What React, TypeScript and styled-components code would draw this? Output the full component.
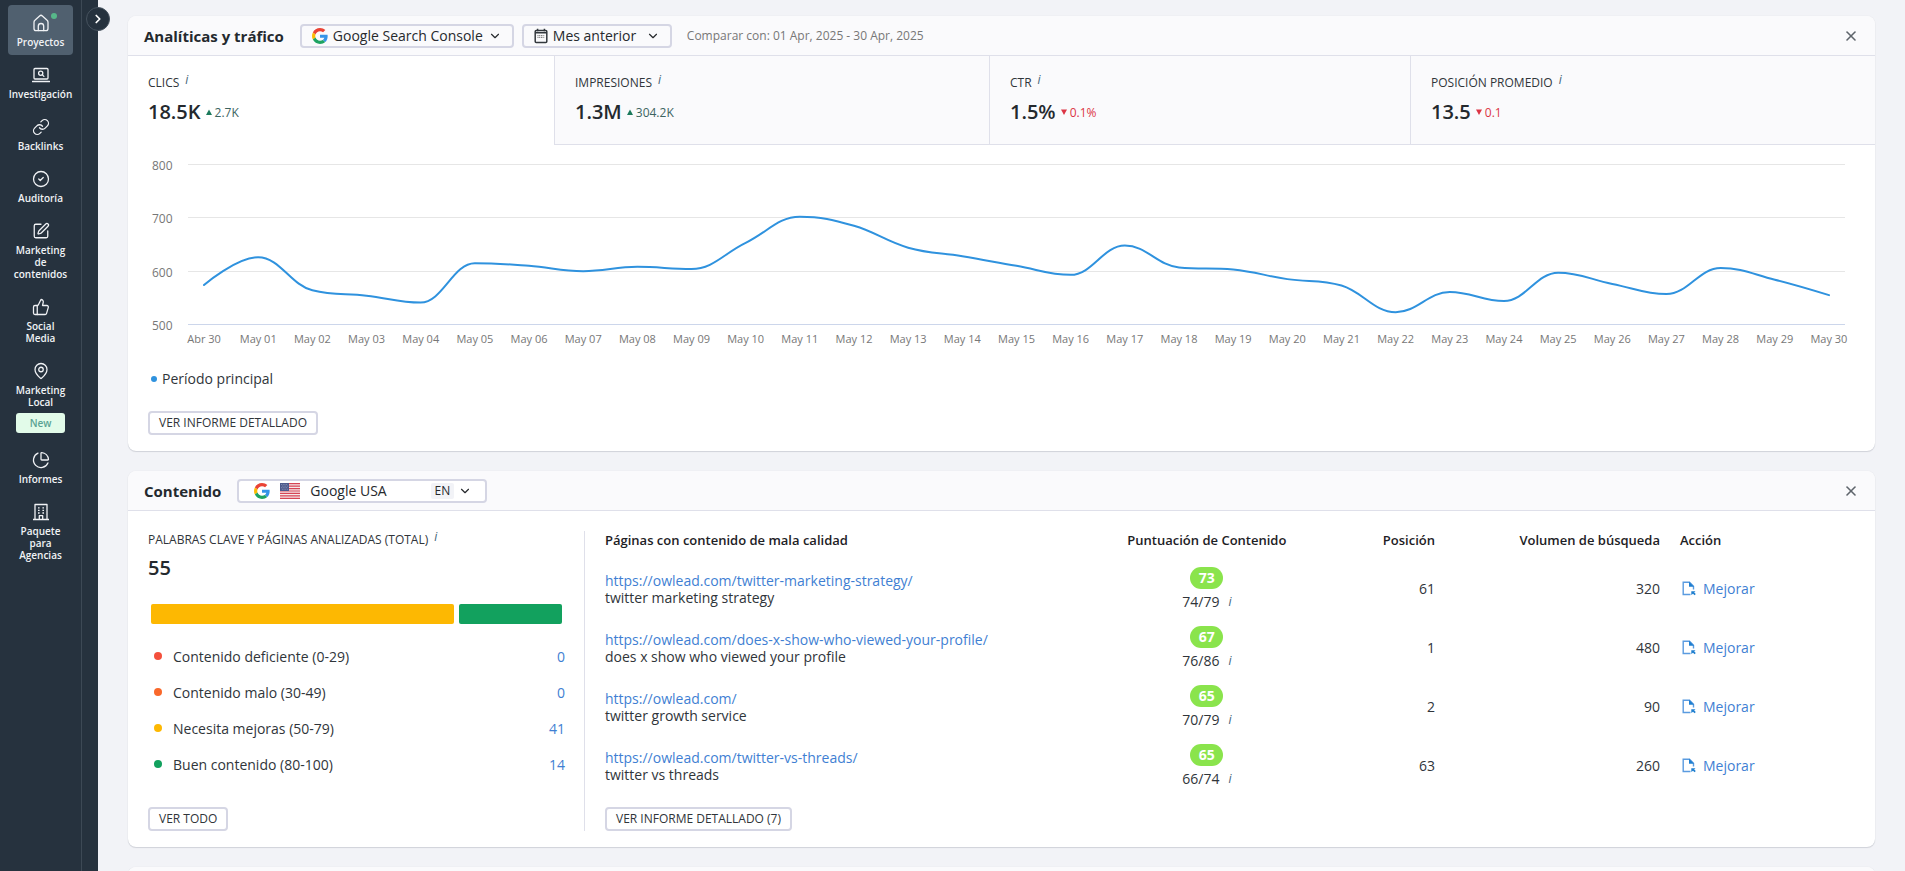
import React from "react";
import styled, { createGlobalStyle } from "styled-components";
import {
  Link,
  CircleCheck,
  SquarePen,
  ThumbsUp,
  MapPin,
  ChartPie,
  ChevronDown,
  ChevronRight,
  X,
} from "lucide-react";

const color = {
  page: "#f2f3f7",
  nav: "#26323e",
  navLine: "#3d4955",
  head: "#fafafc",
  line: "#dfe0ea",
  control: "#d5d6e4",
  text: "#30353a",
  strong: "#24292e",
  muted: "#777777",
  link: "#3f7fd3",
  chart: "#2f92de",
  up: "#1c7a5c",
  down: "#dc3545",
};

const GlobalStyle = createGlobalStyle`
  *, *::before, *::after { box-sizing: border-box; }
  body {
    margin: 0;
    background: ${color.page};
    color: ${color.text};
    font-family: "Open Sans", "Noto Sans", sans-serif;
    font-size: 13px;
    line-height: 17px;
  }
  button, select { font: inherit; color: inherit; }
  button { cursor: pointer; }
  a { color: ${color.link}; text-decoration: none; }
`;

/* ---------- shell ---------- */

const Shell = styled.div`
  display: flex;
  height: 100vh;
`;

const Sidebar = styled.nav`
  position: relative;
  display: flex;
  flex: none;
  width: 98px;
  background: ${color.nav};
`;

const NavList = styled.ul`
  display: flex;
  flex-direction: column;
  gap: 2px;
  width: 82px;
  margin: 0;
  padding: 5px 8px;
  border-right: 1px solid ${color.navLine};
  list-style: none;
`;

const NavItem = styled.a<{ $active?: boolean }>`
  position: relative;
  display: flex;
  flex-direction: column;
  align-items: center;
  gap: 4px;
  padding: 9px 0 7px;
  border-radius: 4px;
  background: ${(p) => (p.$active ? "#50606f" : "transparent")};
  color: #f0f2f5;
  font-size: 10px;
  font-weight: 600;
  line-height: 12px;
  text-align: center;

  svg { display: block; }
`;

const NavLabel = styled.span`
  white-space: pre-line;
`;

const NavDot = styled.span`
  position: absolute;
  top: 8px;
  right: 16px;
  width: 6px;
  height: 6px;
  border-radius: 50%;
  background: #57b88a;
`;

const NewBadge = styled.span`
  width: 49px;
  margin-top: 1px;
  border-radius: 3px;
  background: #e2fbe9;
  color: #5aa393;
  line-height: 20px;
`;

const Toggle = styled.button`
  position: absolute;
  top: 7px;
  right: -12px;
  display: grid;
  place-items: center;
  width: 24px;
  height: 24px;
  padding: 0;
  border: 1px solid #46525e;
  border-radius: 50%;
  background: ${color.nav};
  color: #fff;
`;

const Main = styled.main`
  display: flex;
  flex: 1;
  flex-direction: column;
  gap: 20px;
  min-width: 0;
  padding: 16px 30px;
  overflow-y: auto;
  scrollbar-width: none;
`;

/* ---------- card ---------- */

const Card = styled.section`
  flex: none;
  border-radius: 8px;
  background: #fff;
  box-shadow: 0 0 1px rgba(30, 35, 60, 0.15), 0 1px 1px rgba(30, 35, 60, 0.14);
  overflow: hidden;
`;

const CardHead = styled.header`
  display: flex;
  align-items: center;
  height: 40px;
  padding: 0 16px;
  border-bottom: 1px solid ${color.line};
  background: ${color.head};
`;

const CardTitle = styled.h2`
  margin: 0 16px 0 0;
  color: ${color.strong};
  font-size: 15px;
  font-weight: 700;
  line-height: 20px;
`;

const CloseButton = styled.button`
  display: grid;
  place-items: center;
  width: 16px;
  height: 16px;
  margin-left: auto;
  padding: 0;
  border: 0;
  background: none;
  color: #5e646b;
`;

const Picker = styled.label<{ $width: number }>`
  display: flex;
  align-items: center;
  gap: 5px;
  width: ${(p) => p.$width}px;
  height: 24px;
  margin-right: 8px;
  padding: 0 10px;
  border: 2px solid ${color.control};
  border-radius: 4px;
  background: ${color.head};
  color: #26292d;

  svg { flex: none; }
`;

const WidePicker = styled(Picker)`
  gap: 10px;
  padding: 0 13px 0 15px;
  background: #fff;
`;

const Select = styled.select`
  flex: 1;
  min-width: 0;
  padding: 0;
  border: 0;
  background: transparent;
  font-size: 14px;
  line-height: 18px;
  appearance: none;
`;

const Language = styled.span`
  display: flex;
  align-items: center;
  gap: 4px;
`;

const Chip = styled.span`
  padding: 0 4px;
  border-radius: 2px;
  background: ${color.page};
  font-size: 12px;
  line-height: 16px;
`;

const Compare = styled.span`
  margin-left: 7px;
  color: ${color.muted};
  font-size: 12px;
`;

const OutlineButton = styled.button`
  align-self: flex-start;
  height: 24px;
  padding: 0 9px;
  border: 2px solid ${color.control};
  border-radius: 4px;
  background: #fff;
  font-size: 12px;
  line-height: 20px;
  white-space: nowrap;
`;

const InfoMark = styled.i`
  color: #3f6376;
  font-size: 12px;
  line-height: 12px;
`;

/* ---------- analytics ---------- */

const Tabs = styled.div`
  display: grid;
  grid-template-columns: 426fr 435fr 421fr 465fr;
`;

const Tab = styled.button<{ $active?: boolean }>`
  display: flex;
  flex-direction: column;
  gap: 8px;
  height: 89px;
  padding: 18px 20px 0;
  border: 0;
  border-bottom: 1px solid ${(p) => (p.$active ? "#fff" : color.line)};
  background: ${(p) => (p.$active ? "#fff" : color.head)};
  text-align: left;

  & + & { border-left: 1px solid ${color.line}; }
`;

const Caption = styled.span`
  display: flex;
  gap: 6px;
  font-size: 12px;
  line-height: 18px;
`;

const Figures = styled.span`
  display: flex;
  align-items: center;
  gap: 5px;
`;

const Value = styled.strong`
  color: ${color.strong};
  font-size: 20px;
  font-weight: 600;
  line-height: 24px;
`;

const Delta = styled.span<{ $down?: boolean }>`
  display: flex;
  align-items: center;
  gap: 3px;
  color: ${(p) => (p.$down ? color.down : "#3c6460")};
  font-size: 12px;
`;

const Chart = styled.div`
  display: flex;
  padding: 19px 19px 0 20px;
`;

const YAxis = styled.div`
  display: flex;
  flex-direction: column;
  justify-content: space-between;
  width: 29px;
  height: 176px;
  margin-top: -6px;
  padding-left: 4px;
  color: ${color.muted};
  font-size: 12px;
  line-height: 16px;
`;

const Plot = styled.div`
  flex: 1;
  min-width: 0;
`;

const PlotArea = styled.div`
  display: grid;
  height: 161px;
  padding: 0 11px;

  > * { grid-area: 1 / 1; }
`;

const GridLines = styled.div`
  display: flex;
  flex-direction: column;
  justify-content: space-between;
`;

const GridLine = styled.hr<{ $base?: boolean }>`
  width: 100%;
  margin: 0;
  border: 0;
  border-top: 1px solid ${(p) => (p.$base ? "#ccd6eb" : "#e6e6e6")};
`;

const LineBox = styled.div`
  padding: 1px 16px 0;

  svg { display: block; width: 100%; height: 160px; overflow: visible; }
`;

const XAxis = styled.div`
  display: grid;
  grid-template-columns: repeat(31, 1fr);
  margin-top: 6px;
  color: ${color.muted};
  font-size: 11px;
  line-height: 16px;
  text-align: center;
  white-space: nowrap;
`;

const XTick = styled.span`
  display: flex;
  justify-content: center;
`;

const CardFoot = styled.div`
  display: flex;
  flex-direction: column;
  gap: 23px;
  padding: 23px 20px 16px;
`;

const Legend = styled.div`
  display: flex;
  align-items: center;
  gap: 5px;
  padding-left: 3px;
  font-size: 14px;
  line-height: 18px;
`;

const Dot = styled.span<{ $color: string; $size: number }>`
  flex: none;
  width: ${(p) => p.$size}px;
  height: ${(p) => p.$size}px;
  border-radius: 50%;
  background: ${(p) => p.$color};
`;

/* ---------- content ---------- */

const ContentBody = styled.div`
  display: flex;
  align-items: stretch;
  padding: 20px 20px 16px;
`;

const Summary = styled.div`
  display: flex;
  flex: none;
  flex-direction: column;
  width: 25.6%;
  height: 300px;
  padding-right: 19px;
  border-right: 1px solid ${color.line};
`;

const Total = styled(Value)`
  margin: 7px 0 24px;
`;

const Bars = styled.div`
  display: flex;
  gap: 5px;
  height: 20px;
  margin: 0 3px 24px;
`;

const Bar = styled.span<{ $weight: number; $color: string }>`
  flex: ${(p) => p.$weight} 1 0;
  border-radius: 2px;
  background: ${(p) => p.$color};
`;

const Groups = styled.ul`
  flex: 1;
  margin: 0;
  padding: 0 0 0 6px;
  list-style: none;
`;

const Group = styled.li`
  display: flex;
  align-items: center;
  gap: 11px;
  height: 16px;
  margin-bottom: 20px;
  font-size: 14px;

  a { margin-left: auto; }
`;

const Pages = styled.div`
  display: flex;
  flex: 1;
  flex-direction: column;
  justify-content: space-between;
  min-width: 0;
  padding-left: 20px;
`;

const PageTable = styled.table`
  width: 100%;
  margin-top: -10px;
  border-collapse: collapse;
  table-layout: fixed;

  th { height: 38px; color: #1d2125; font-size: 13px; font-weight: 600; white-space: nowrap; }
  td { height: 59px; font-size: 14px; line-height: 17px; }
`;

type Align = "left" | "center" | "right";

const HeadCell = styled.th<{ $width: string; $align: Align; $inset?: number }>`
  width: ${(p) => p.$width};
  padding: 0 0 0 ${(p) => p.$inset ?? 0}px;
  text-align: ${(p) => p.$align};
`;

const Cell = styled.td<{ $align: Align; $inset?: number }>`
  padding: 0 0 0 ${(p) => p.$inset ?? 0}px;
  text-align: ${(p) => p.$align};
`;

const PageLink = styled.a`
  display: block;
`;

const Score = styled.span`
  display: block;
  width: 33px;
  margin: 0 auto 4px;
  border-radius: 11px;
  background: #8ae44c;
  color: #fff;
  font-weight: 700;
  line-height: 22px;
`;

const ScoreRange = styled.span`
  display: flex;
  align-items: center;
  justify-content: center;
  gap: 9px;
`;

const Improve = styled.a`
  display: flex;
  align-items: center;
  gap: 7px;
`;

/* ---------- drawings ---------- */

const stroke = {
  width: 18,
  height: 18,
  viewBox: "0 0 18 18",
  fill: "none",
  stroke: "currentColor",
  strokeWidth: 1.3,
  strokeLinecap: "round" as const,
  strokeLinejoin: "round" as const,
};

const HomeIcon = () => (
  <svg {...stroke}>
    <path d="M2 8.200c0-.8.3-1.500.9-2L7.600 1.900a2.100 2.100 0 0 1 2.800 0l4.700 4.300c.6.5.9 1.200.9 2v6.200a2.200 2.200 0 0 1-2.200 2.200H4.200A2.200 2.200 0 0 1 2 14.400z" />
    <path d="M6.300 16.500v-4.300a2.700 2.700 0 0 1 5.400 0v4.300" />
  </svg>
);

const ResearchIcon = () => (
  <svg {...stroke}>
    <rect x="2" y="2.500" width="14" height="10.500" rx="1" />
    <path d="M.5 15.500h17" />
    <circle cx="8.700" cy="7.200" r="2.100" />
    <path d="m10.400 8.900 1.500 1.500" />
  </svg>
);

const BuildingIcon = () => (
  <svg {...stroke} strokeLinecap="butt">
    <path d="M3 16.500V1.500h12v15M1 16.500h16M7.300 16.500v-3.800h3.400v3.800" />
    <path d="M6 4.800h1.600M10.400 4.800H12M6 7.400h1.600M10.400 7.400H12M6 10h1.600M10.400 10H12" />
  </svg>
);

const GoogleIcon = () => (
  <svg width="16" height="16" viewBox="0 0 48 48">
    <path fill="#EA4335" d="M24 9.500c3.540 0 6.710 1.220 9.210 3.600l6.850-6.850C35.900 2.380 30.470 0 24 0 14.620 0 6.510 5.380 2.560 13.220l7.980 6.190C12.430 13.720 17.740 9.500 24 9.500z" />
    <path fill="#3594e8" d="M46.980 24.550c0-1.570-.15-3.090-.38-4.550H24v9.020h12.940c-.58 2.960-2.260 5.480-4.780 7.180l7.730 6c4.510-4.180 7.090-10.360 7.090-17.650z" />
    <path fill="#FBBC05" d="M10.530 28.590c-.48-1.450-.76-2.990-.76-4.590s.27-3.140.76-4.590l-7.980-6.190C.92 16.460 0 20.120 0 24c0 3.880.92 7.540 2.560 10.780l7.970-6.190z" />
    <path fill="#1ea362" d="M24 48c6.480 0 11.930-2.130 15.890-5.810l-7.730-6c-2.150 1.450-4.920 2.300-8.160 2.300-6.260 0-11.570-4.220-13.470-9.910l-7.980 6.190C6.510 42.620 14.620 48 24 48z" />
  </svg>
);

const CalendarIcon = () => (
  <svg width="14" height="16" viewBox="0 0 14 16" fill="none" stroke="#33383d" strokeWidth="1.500">
    <rect x="1.200" y="2.600" width="11.600" height="12" rx="1" />
    <path d="M1.200 4.800h11.600M3.600.8v2.500M10.400.8v2.500" />
    <path d="M3.500 7.500h7M3.500 9.300h7" strokeDasharray="1 .7" strokeWidth="1.200" stroke="#777" />
  </svg>
);

const FlagIcon = () => (
  <svg width="20" height="16" viewBox="0 0 20 16">
    <rect width="20" height="16" fill="#f4e9ea" />
    <path stroke="#d64555" strokeWidth="1.230" d="M0 .6h20M0 3.080h20M0 5.540h20M0 8h20M0 10.460h20M0 12.920h20M0 15.380h20" />
    <rect width="9" height="8" fill="#4d5a8c" />
    <path stroke="#b9c0da" strokeWidth=".7" strokeDasharray=".7 1.100" d="M1 1.500h7M1.900 3.100h6M1 4.700h7M1.900 6.300h6" />
  </svg>
);

const ImproveIcon = () => (
  <svg width="14" height="15" viewBox="0 0 14 15" fill="none" stroke="#5a9be0" strokeWidth="1.400">
    <path d="M8.500 13.500H1.200V1.200h6.300l4 4v3.300" />
    <path d="M7 .8v5h5z" fill="#1f7fd0" stroke="none" />
    <path d="M9.300 10.200h4.200l-1.300 1.300 1.600 1.600-1.200 1.200-1.600-1.600-1.700 1.300z" fill="#1f7fd0" stroke="none" />
  </svg>
);

const Triangle = ({ down }: { down?: boolean }) => (
  <svg width="6" height="6" viewBox="0 0 6 6">
    <path d={down ? "M0 .5h6L3 6z" : "M3 .5 6 6H0z"} fill={down ? color.down : color.up} />
  </svg>
);

/* ---------- data ---------- */

const iconProps = { size: 18, strokeWidth: 1.700 };

const navigation = [
  { label: "Proyectos", icon: <HomeIcon />, active: true },
  { label: "Investigación", icon: <ResearchIcon /> },
  { label: "Backlinks", icon: <Link {...iconProps} /> },
  { label: "Auditoría", icon: <CircleCheck {...iconProps} /> },
  { label: "Marketing\nde\ncontenidos", icon: <SquarePen {...iconProps} /> },
  { label: "Social\nMedia", icon: <ThumbsUp {...iconProps} /> },
  { label: "Marketing\nLocal", icon: <MapPin {...iconProps} />, badge: "New" },
  { label: "Informes", icon: <ChartPie {...iconProps} /> },
  { label: "Paquete\npara\nAgencias", icon: <BuildingIcon /> },
];

const metrics = [
  { name: "CLICS", value: "18.5K", delta: "2.7K", active: true },
  { name: "IMPRESIONES", value: "1.3M", delta: "304.2K" },
  { name: "CTR", value: "1.5%", delta: "0.1%", down: true },
  { name: "POSICIÓN PROMEDIO", value: "13.5", delta: "0.1", down: true },
];

const clicks = [
  575, 627, 565, 555, 542, 616, 611, 601, 609, 605, 654, 703, 686, 645, 629, 611,
  594, 649, 608, 604, 586, 574, 524, 562, 545, 598, 577, 558, 607, 585, 556,
];

const days = clicks.map((_, i) => (i === 0 ? "Abr 30" : `May ${String(i).padStart(2, "0")}`));

const groups = [
  { label: "Contenido deficiente (0-29)", count: 0, color: "#f4503c" },
  { label: "Contenido malo (30-49)", count: 0, color: "#f9682b" },
  { label: "Necesita mejoras (50-79)", count: 41, color: "#fdb802" },
  { label: "Buen contenido (80-100)", count: 14, color: "#12a15e" },
];

const pages = [
  { url: "https://owlead.com/twitter-marketing-strategy/", keyword: "twitter marketing strategy", score: 73, range: "74/79", position: 61, volume: 320 },
  { url: "https://owlead.com/does-x-show-who-viewed-your-profile/", keyword: "does x show who viewed your profile", score: 67, range: "76/86", position: 1, volume: 480 },
  { url: "https://owlead.com/", keyword: "twitter growth service", score: 65, range: "70/79", position: 2, volume: 90 },
  { url: "https://owlead.com/twitter-vs-threads/", keyword: "twitter vs threads", score: 65, range: "66/74", position: 63, volume: 260 },
];

/* Smooth line whose control points never overshoot the neighbouring values. */
function splinePath(values: number[], step: number, height: number) {
  const pts = values.map((v, i) => ({ x: i * step, y: ((800 - v) / 300) * height }));
  let d = `M${pts[0].x} ${pts[0].y}`;
  let out = { ...pts[0] };
  for (let i = 1; i < pts.length; i++) {
    const a = pts[i - 1];
    const p = pts[i];
    const b = pts[i + 1];
    let left = { ...p };
    let right = { ...p };
    if (b) {
      left = { x: (1.5 * p.x + a.x) / 2.5, y: (1.5 * p.y + a.y) / 2.5 };
      right = { x: (1.5 * p.x + b.x) / 2.5, y: (1.5 * p.y + b.y) / 2.5 };
      const fix = ((right.y - left.y) * (right.x - p.x)) / (right.x - left.x) + p.y - right.y;
      left.y += fix;
      right.y += fix;
      if (left.y > a.y && left.y > p.y) {
        left.y = Math.max(a.y, p.y);
        right.y = 2 * p.y - left.y;
      } else if (left.y < a.y && left.y < p.y) {
        left.y = Math.min(a.y, p.y);
        right.y = 2 * p.y - left.y;
      }
      if (right.y > b.y && right.y > p.y) {
        right.y = Math.max(b.y, p.y);
        left.y = 2 * p.y - right.y;
      } else if (right.y < b.y && right.y < p.y) {
        right.y = Math.min(b.y, p.y);
        left.y = 2 * p.y - right.y;
      }
    }
    d += `C${out.x} ${out.y} ${left.x} ${left.y} ${p.x} ${p.y}`;
    out = right;
  }
  return d;
}

/* ---------- views ---------- */

const Navigation = () => (
  <Sidebar>
    <NavList>
      {navigation.map((item) => (
        <li key={item.label}>
          <NavItem href="#" $active={item.active}>
            {item.icon}
            {item.active && <NavDot />}
            <NavLabel>{item.label}</NavLabel>
            {item.badge && <NewBadge>{item.badge}</NewBadge>}
          </NavItem>
        </li>
      ))}
    </NavList>
    <Toggle aria-label="Expandir menú">
      <ChevronRight size={14} strokeWidth={3} />
    </Toggle>
  </Sidebar>
);

const Close = () => (
  <CloseButton aria-label="Cerrar">
    <X size={16} strokeWidth={2.400} />
  </CloseButton>
);

const Analytics = () => (
  <Card>
    <CardHead>
      <CardTitle>Analíticas y tráfico</CardTitle>
      <Picker $width={214}>
        <GoogleIcon />
        <Select aria-label="Fuente">
          <option>Google Search Console</option>
        </Select>
        <ChevronDown size={14} />
      </Picker>
      <Picker $width={150}>
        <CalendarIcon />
        <Select aria-label="Período">
          <option>Mes anterior</option>
        </Select>
        <ChevronDown size={14} />
      </Picker>
      <Compare>Comparar con: 01 Apr, 2025 - 30 Apr, 2025</Compare>
      <Close />
    </CardHead>
    <Tabs role="tablist">
      {metrics.map((m) => (
        <Tab key={m.name} role="tab" aria-selected={!!m.active} $active={m.active}>
          <Caption>
            {m.name}
            <InfoMark>i</InfoMark>
          </Caption>
          <Figures>
            <Value>{m.value}</Value>
            <Delta $down={m.down}>
              <Triangle down={m.down} />
              {m.delta}
            </Delta>
          </Figures>
        </Tab>
      ))}
    </Tabs>
    <Chart>
      <YAxis>
        <span>800</span>
        <span>700</span>
        <span>600</span>
        <span>500</span>
      </YAxis>
      <Plot>
        <PlotArea>
          <GridLines>
            <GridLine />
            <GridLine />
            <GridLine />
            <GridLine $base />
          </GridLines>
          <LineBox>
            <svg viewBox="0 0 1620 160" preserveAspectRatio="none">
              <path
                d={splinePath(clicks, 54, 160)}
                fill="none"
                stroke={color.chart}
                strokeWidth="2"
                strokeLinecap="round"
                vectorEffect="non-scaling-stroke"
              />
            </svg>
          </LineBox>
        </PlotArea>
        <XAxis>
          {days.map((d) => (
            <XTick key={d}>{d}</XTick>
          ))}
        </XAxis>
      </Plot>
    </Chart>
    <CardFoot>
      <Legend>
        <Dot $color={color.chart} $size={6} />
        Período principal
      </Legend>
      <OutlineButton>VER INFORME DETALLADO</OutlineButton>
    </CardFoot>
  </Card>
);

const Content = () => (
  <Card>
    <CardHead>
      <CardTitle>Contenido</CardTitle>
      <WidePicker $width={250}>
        <GoogleIcon />
        <FlagIcon />
        <Select aria-label="Buscador">
          <option>Google USA</option>
        </Select>
        <Language>
          <Chip>EN</Chip>
          <ChevronDown size={14} />
        </Language>
      </WidePicker>
      <Close />
    </CardHead>
    <ContentBody>
      <Summary>
        <Caption>
          PALABRAS CLAVE Y PÁGINAS ANALIZADAS (TOTAL)
          <InfoMark>i</InfoMark>
        </Caption>
        <Total>55</Total>
        <Bars>
          {groups
            .filter((g) => g.count > 0)
            .map((g) => (
              <Bar key={g.label} $weight={g.count} $color={g.color} />
            ))}
        </Bars>
        <Groups>
          {groups.map((g) => (
            <Group key={g.label}>
              <Dot $color={g.color} $size={8} />
              {g.label}
              <a href="#">{g.count}</a>
            </Group>
          ))}
        </Groups>
        <OutlineButton>VER TODO</OutlineButton>
      </Summary>
      <Pages>
        <PageTable>
          <thead>
            <tr>
              <HeadCell $width="40.9%" $align="left">Páginas con contenido de mala calidad</HeadCell>
              <HeadCell $width="14.5%" $align="center">Puntuación de Contenido</HeadCell>
              <HeadCell $width="11%" $align="right">Posición</HeadCell>
              <HeadCell $width="18%" $align="right">Volumen de búsqueda</HeadCell>
              <HeadCell $width="15.6%" $align="left" $inset={20}>Acción</HeadCell>
            </tr>
          </thead>
          <tbody>
            {pages.map((p) => (
              <tr key={p.url}>
                <Cell $align="left">
                  <PageLink href="#">{p.url}</PageLink>
                  {p.keyword}
                </Cell>
                <Cell $align="center">
                  <Score>{p.score}</Score>
                  <ScoreRange>
                    {p.range}
                    <InfoMark>i</InfoMark>
                  </ScoreRange>
                </Cell>
                <Cell $align="right">{p.position}</Cell>
                <Cell $align="right">{p.volume}</Cell>
                <Cell $align="left" $inset={22}>
                  <Improve href="#">
                    <ImproveIcon />
                    Mejorar
                  </Improve>
                </Cell>
              </tr>
            ))}
          </tbody>
        </PageTable>
        <OutlineButton>VER INFORME DETALLADO (7)</OutlineButton>
      </Pages>
    </ContentBody>
  </Card>
);

export default function App() {
  return (
    <>
      <GlobalStyle />
      <Shell>
        <Navigation />
        <Main>
          <Analytics />
          <Content />
          <Card>
            <CardHead />
          </Card>
        </Main>
      </Shell>
    </>
  );
}
